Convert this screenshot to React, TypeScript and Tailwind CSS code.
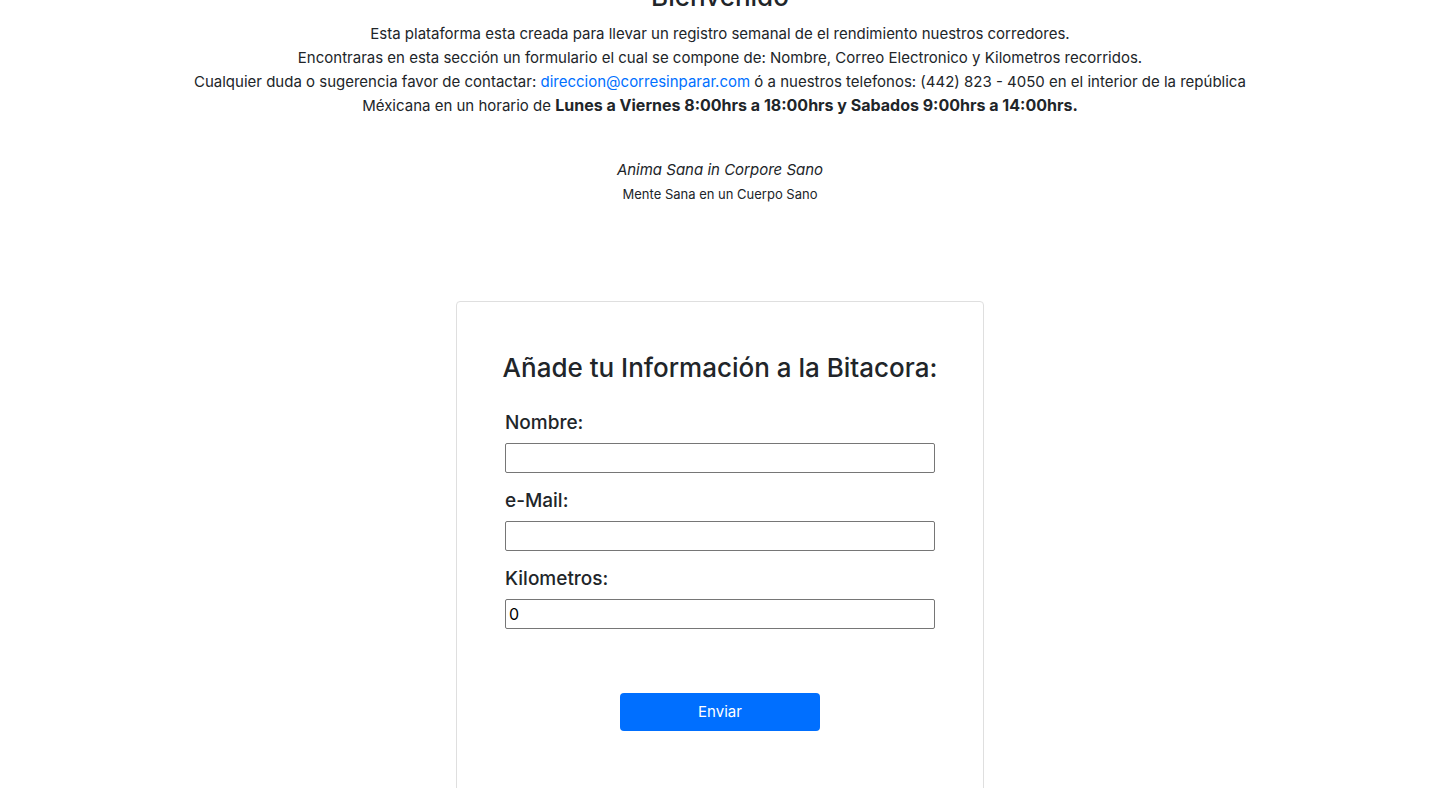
import React from "react";

const fields = [
  { id: "nombre", label: "Nombre:", type: "text", value: "" },
  { id: "email", label: "e-Mail:", type: "email", value: "" },
  { id: "kilometros", label: "Kilometros:", type: "number", value: "0" },
];

function Intro() {
  return (
    <section className="mx-auto -mt-5 max-w-[1110px] px-4 text-center">
      <h2 className="mb-2 text-[26px] leading-[34px] font-medium">Bienvenido</h2>
      <p>
        Esta plataforma esta creada para llevar un registro semanal de el rendimiento nuestros corredores.
        <br />
        Encontraras en esta sección un formulario el cual se compone de: Nombre, Correo Electronico y Kilometros recorridos.
        <br />
        Cualquier duda o sugerencia favor de contactar:{" "}
        <a href="mailto:direccion@corresinparar.com" className="text-[#0070ff]">direccion@corresinparar.com</a>{" "}
        ó a nuestros telefonos: (442) 823 - 4050 en el interior de la república Méxicana en un horario de{" "}
        <b className="text-base/5">Lunes a Viernes 8:00hrs a 18:00hrs y Sabados 9:00hrs a 14:00hrs.</b>
      </p>
      <p className="mt-10 italic">Anima Sana in Corpore Sano</p>
      <p className="text-[13px] leading-6">Mente Sana en un Cuerpo Sano</p>
    </section>
  );
}

export default function App() {
  return (
    <main className="flow-root h-screen overflow-hidden bg-white font-[Inter,'Liberation_Sans',sans-serif] text-[15px] leading-6 text-[#212529]">
      <Intro />
      <form
        className="mx-auto mt-[95px] max-w-[528px] rounded border border-[#dfdfdf] px-12 pt-12 pb-24"
        onSubmit={(e) => e.preventDefault()}
      >
        <h3 className="-mx-2 mb-[25px] text-center text-[26px] leading-9 font-medium">Añade tu Información a la Bitacora:</h3>
        {fields.map((f) => (
          <div key={f.id} className="mb-4">
            <label htmlFor={f.id} className="mb-2 block text-[19px] leading-6 font-medium">{f.label}</label>
            <input
              id={f.id}
              type={f.type}
              defaultValue={f.value}
              className="block h-[30px] w-full rounded-[2px] border border-[#767676] bg-white px-[3px] text-base text-black"
            />
          </div>
        ))}
        <button type="submit" className="mx-auto mt-16 block h-[38px] w-[200px] rounded bg-[#006fff] text-white">
          Enviar
        </button>
      </form>
    </main>
  );
}
